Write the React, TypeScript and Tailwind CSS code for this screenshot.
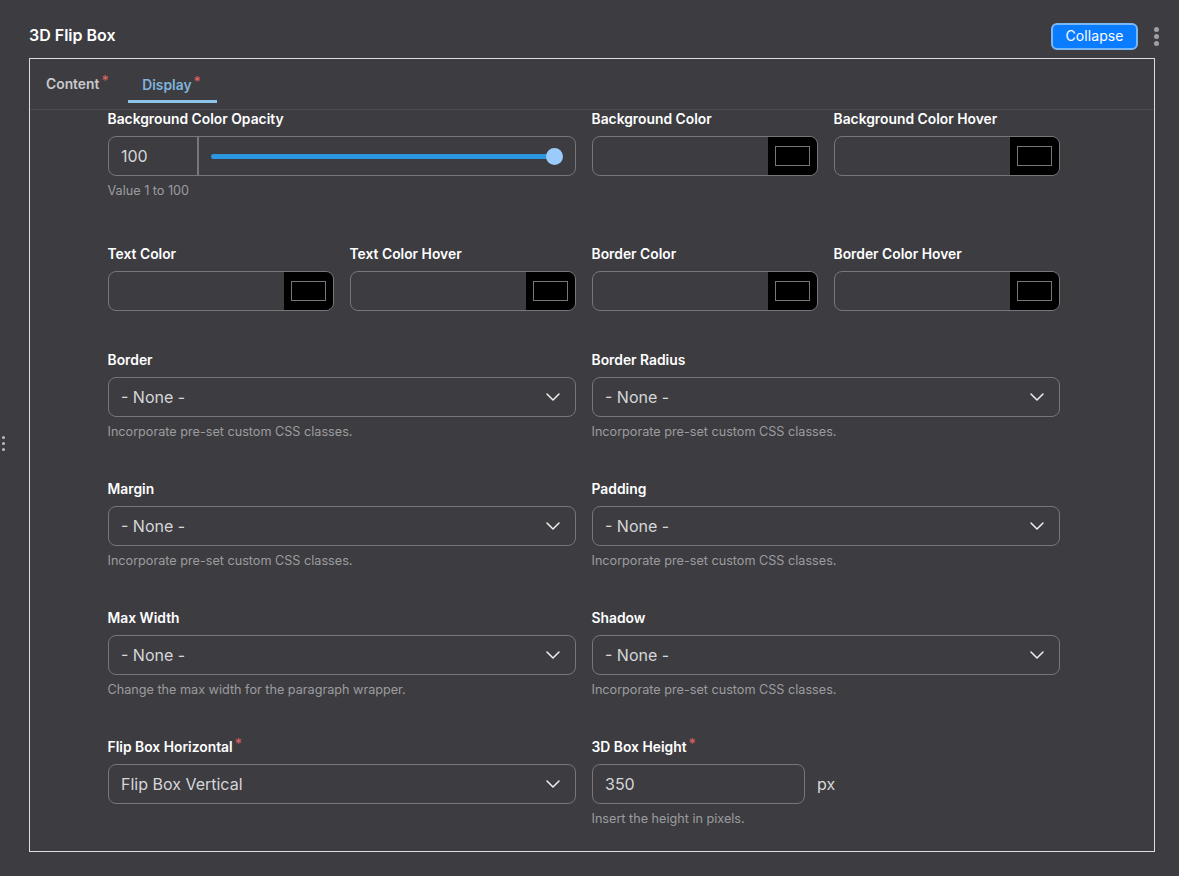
import { ChevronDown } from "lucide-react";
import type { ReactNode } from "react";

type FieldProps = {
  label: string;
  required?: boolean;
  help?: string;
  children: ReactNode;
  className?: string;
};

function Required() {
  return <span className="relative -top-[3px] ml-0.5 text-[14px] leading-none font-medium text-[#d9605f]">*</span>;
}

function Field({ label, required, help, children, className }: FieldProps) {
  return (
    <div className={className}>
      <div className="mb-[7px] -ml-[0.5px] flex h-5 items-center text-[13.85px] leading-5 font-semibold text-white">
        {label}
        {required && <Required />}
      </div>
      {children}
      {help && <p className="mt-[5px] -ml-[0.5px] text-[12.65px] leading-5 text-[#9c9c9f]">{help}</p>}
    </div>
  );
}

function ColorInput({ label }: { label: string }) {
  return (
    <Field label={label}>
      <div className="flex h-10 overflow-hidden rounded-lg border border-[#77777b]">
        <div className="flex-1" />
        <div className="flex w-[49px] items-center justify-center bg-black">
          <div className="h-5 w-[35px] border border-[#77777b] bg-black" />
        </div>
      </div>
    </Field>
  );
}

function SelectInput({ label, value = "- None -", help, required }: { label: string; value?: string; help?: string; required?: boolean }) {
  return (
    <Field label={label} help={help} required={required} className="col-span-2">
      <div className="flex h-10 items-center justify-between rounded-lg border border-[#77777b] pr-[10px] pl-3 text-[16px] text-[#d6d6d8]">
        <span>{value}</span>
        <ChevronDown className="size-6 text-[#f0f0f0]" strokeWidth={1.5} />
      </div>
    </Field>
  );
}

function Dots({ className }: { className: string }) {
  return (
    <div className={className}>
      <span className="block size-[3px] rounded-full bg-current" />
      <span className="block size-[3px] rounded-full bg-current" />
      <span className="block size-[3px] rounded-full bg-current" />
    </div>
  );
}

const cssHelp = "Incorporate pre-set custom CSS classes.";

export default function App() {
  return (
    <div className="relative h-[876px] w-[1179px] overflow-hidden bg-[#3c3c41] pt-[22px] pl-[29px] font-['Inter',sans-serif]">
      <Dots className="absolute top-[436px] left-[2px] flex flex-col gap-[3px] text-[#bdbdc0]" />

      {/* Header */}
      <div className="flex h-7 w-[1145px] items-center justify-between">
        <h2 className="pb-[2px] text-[16px] leading-6 font-semibold text-white">3D Flip Box</h2>
        <div className="flex items-center">
          <button className="h-[27px] w-[87px] rounded-md border-2 border-[#7ab8f5] bg-[#0a7cff] text-[14px] leading-none tracking-[0.1px] text-white">
            Collapse
          </button>
          <div className="flex w-[36px] justify-center">
            <Dots className="flex flex-col gap-[2px] text-[#a0a0a3] [&>span]:size-[5px]" />
          </div>
        </div>
      </div>

      {/* Panel */}
      <div className="mt-2 h-[794px] w-[1126px] border border-[#dcdcdc]">
        {/* Tabs */}
        <div className="flex h-[51px] border-b border-[#4a4a4f] pl-[1px]">
          <div className="flex h-[50px] w-[97px] items-center pl-[15px] text-[13.85px] font-semibold text-[#c9c9cb]">
            Content
            <Required />
          </div>
          <div className="flex h-[44px] w-[89px] items-center justify-center border-b-[3px] border-[#8cc4ea] pt-[11px] pr-[2px] text-[13.85px] font-semibold text-[#7fb4dc]">
            Display
            <Required />
          </div>
        </div>

        <div className="-mt-px ml-[78px] w-[952px]">
          {/* Opacity + background colors */}
          <div className="grid grid-cols-4 gap-x-4">
            <Field label="Background Color Opacity" help="Value 1 to 100" className="col-span-2">
              <div className="flex h-10 items-center rounded-lg border border-[#77777b]">
                <div className="flex h-full w-[90px] items-center border-r-2 border-[#77777b] pl-3 text-[16px] text-[#d6d6d8]">
                  100
                </div>
                <div className="ml-[12px] flex flex-1 items-center pr-[9px]">
                  <div className="h-[5px] flex-1 rounded-l-sm bg-[#2a97e0]" />
                  <div className="-ml-1 size-[17px] rounded-full bg-[#9acbfb]" />
                </div>
                <div className="w-[3px]" />
              </div>
            </Field>
            <ColorInput label="Background Color" />
            <ColorInput label="Background Color Hover" />
          </div>

          {/* Text + border colors */}
          <div className="mt-[43px] grid grid-cols-4 gap-x-4">
            <ColorInput label="Text Color" />
            <ColorInput label="Text Color Hover" />
            <ColorInput label="Border Color" />
            <ColorInput label="Border Color Hover" />
          </div>

          <div className="mt-[39px] grid grid-cols-4 gap-x-4">
            <SelectInput label="Border" help={cssHelp} />
            <SelectInput label="Border Radius" help={cssHelp} />
          </div>

          <div className="mt-[37px] grid grid-cols-4 gap-x-4">
            <SelectInput label="Margin" help={cssHelp} />
            <SelectInput label="Padding" help={cssHelp} />
          </div>

          <div className="mt-[37px] grid grid-cols-4 gap-x-4">
            <SelectInput label="Max Width" help="Change the max width for the paragraph wrapper." />
            <SelectInput label="Shadow" help={cssHelp} />
          </div>

          <div className="mt-[37px] grid grid-cols-4 gap-x-4">
            <SelectInput label="Flip Box Horizontal" value="Flip Box Vertical" required />
            <Field label="3D Box Height" required help="Insert the height in pixels." className="col-span-2">
              <div className="flex items-center">
                <div className="flex h-10 w-[213px] items-center rounded-lg border border-[#77777b] pl-3 text-[16px] text-[#d6d6d8]">
                  350
                </div>
                <span className="ml-3 text-[16px] text-[#d6d6d8]">px</span>
              </div>
            </Field>
          </div>
        </div>
      </div>
    </div>
  );
}
